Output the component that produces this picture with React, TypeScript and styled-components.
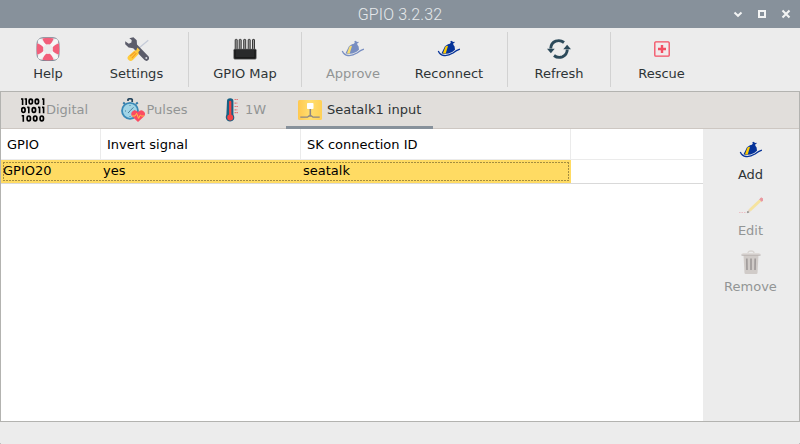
import React from "react";
import styled, { createGlobalStyle } from "styled-components";

const GlobalStyle = createGlobalStyle`
  body { margin: 0; background: #3b3b3b; }
  * { box-sizing: border-box; }
`;

const Window = styled.div`
  width: 800px;
  height: 444px;
  display: flex;
  flex-direction: column;
  background: #ececec;
  border-radius: 0 0 1px 1px;
  overflow: hidden;
  font: 13px/16px "DejaVu Sans", sans-serif;
  color: #2e3436;
`;

const TitleBar = styled.header`
  height: 28px;
  flex: none;
  display: grid;
  grid-template-columns: 80px 1fr 80px;
  align-items: center;
  background: #87919b;
  color: #e6e9eb;
`;

const Title = styled.h1`
  grid-column: 2;
  margin: 0;
  padding-top: 2px;
  text-align: center;
  font: 300 16px/26px Roboto, sans-serif;
  letter-spacing: 0.15px;
`;

const WindowControls = styled.div`
  display: flex;
  justify-content: flex-end;
  gap: 12px;
  padding-right: 8px;

  svg { display: block; }
`;

const Toolbar = styled.nav`
  height: 63px;
  flex: none;
  display: flex;
  padding: 4px 0;
`;

const Tool = styled.button<{ $width: number; $disabled?: boolean }>`
  width: ${(p) => p.$width}px;
  height: 56px;
  flex: none;
  display: flex;
  flex-direction: column;
  align-items: center;
  gap: 5px;
  padding: 5px 0 0;
  border: 0;
  background: none;
  font: inherit;
  white-space: nowrap;
  color: ${(p) => (p.$disabled ? "#929595" : "#2e3436")};
`;

const Spacer = styled.span<{ $width: number }>`
  width: ${(p) => p.$width}px;
  flex: none;
`;

const Separator = styled.div`
  width: 1px;
  height: 55px;
  flex: none;
  background: #d2d2d2;
`;

const Glyph = styled.svg<{ $faded?: boolean }>`
  display: block;
  flex: none;
  opacity: ${(p) => (p.$faded ? 0.5 : 1)};
`;

const Notebook = styled.main`
  height: 331px;
  flex: none;
  display: flex;
  flex-direction: column;
  border: 1px solid #b3b3b0;
`;

const TabBar = styled.div`
  height: 37px;
  flex: none;
  display: flex;
  background: #e1dedb;
  border-bottom: 1px solid #cdc7c2;
`;

const Tab = styled.div<{ $width: number; $pad: number; $gap: number; $active?: boolean }>`
  width: ${(p) => p.$width}px;
  height: 37px;
  flex: none;
  display: flex;
  align-items: center;
  gap: ${(p) => p.$gap}px;
  padding: 0 0 1px ${(p) => p.$pad}px;
  white-space: nowrap;
  color: ${(p) => (p.$active ? "#2e3436" : "#929595")};
  box-shadow: ${(p) => (p.$active ? "inset 0 -3px #87919b" : "none")};
`;

const Page = styled.div`
  flex: 1;
  display: flex;
`;

const List = styled.div`
  width: 702px;
  background: #fff;
  color: #000;
`;

const HeaderRow = styled.div`
  height: 31px;
  display: grid;
  grid-template-columns: 100px 200px 270px;
  border-bottom: 1px solid #ebebeb;
`;

const HeaderCell = styled.div`
  padding: 8px 6px 0;
  border-right: 1px solid #ebebeb;
`;

const RowLine = styled.div`
  height: 24px;
  border-bottom: 1px solid #d9d9d9;
`;

const dashX = "repeating-linear-gradient(90deg, #a48d40 0 2px, transparent 2px 3px)";
const dashY = "repeating-linear-gradient(180deg, #a48d40 0 2px, transparent 2px 3px)";

const SelectedRow = styled.div`
  width: 570px;
  height: 23px;
  display: grid;
  grid-template-columns: 100px 200px 270px;
  background:
    ${dashX} 2px 2px / 566px 1px no-repeat,
    ${dashX} 2px 20px / 566px 1px no-repeat,
    ${dashY} 2px 2px / 1px 19px no-repeat,
    ${dashY} 567px 2px / 1px 19px no-repeat,
    #ffdb63;
`;

const Cell = styled.div`
  padding: 3px 2px;
`;

const SidePanel = styled.aside`
  flex: 1;
  padding-top: 4px;
`;

type IconProps = { faded?: boolean };

const HelpIcon = () => (
  <Glyph width="24" height="24" viewBox="0 0 24 24">
    <rect x="1" y=".7" width="22" height="22.8" rx="6" fill="#e9eaec" stroke="#7d8794" strokeWidth="1" />
    <path d="M6.300 1.500q5.700-1.400 11.400 0l-3 6.500h-5.400zM6.300 22.700q5.700 1.400 11.400 0l-3-6.500h-5.400zM1.300 6.300q-1.200 5.700 0 11.400l6.200-3v-5.400zM22.700 6.300q1.200 5.700 0 11.400l-6.200-3v-5.400z" fill="#f25f7b" />
    <path d="M4 4.200l16 16M20 4.200l-16 16" stroke="#f6f6f6" strokeWidth="4" strokeLinecap="round" />
    <circle cx="12" cy="12.100" r="4.800" fill="#ececec" />
  </Glyph>
);

const SettingsIcon = () => (
  <Glyph width="24" height="24" viewBox="0 0 24 24">
    <path d="M23.3 3.2L14 11" stroke="#c5cbd8" strokeWidth="1.3" />
    <path d="M4.3 1.2l4.1-.9 3.3 3 .3 4.1 11.4 11.9q1.6 2-.2 3.7t-3.7.1L8.2 11.2 3.6 10.6.2 7.2V4.3l3.6 2.4 2.6-1.2.3-2.6z" fill="#5c5d6b" />
    <circle cx="21.3" cy="21.1" r="1" fill="#d9dbe0" />
    <path d="M12.4 10.5l2.6 2.7-1.6 1.8.3 1.9-5.8 6.2q-2.2 1.7-4.3 0t-.3-4.2l6.2-5.5 1.7.1z" fill="#ffcb3d" />
    <path d="M5.1 19.2l5-4.3M6.9 21.1l4.5-5" stroke="#f49a25" strokeWidth="1.1" />
  </Glyph>
);

const GpioIcon = () => (
  <Glyph width="24" height="24" viewBox="0 0 24 24">
    <g fill="#a2a2a2" stroke="#292929" strokeWidth=".9">
      {[2, 6, 10.5, 15, 19.3].map((x) => (
        <rect key={x} x={x + 0.2} y="2.4" width="2" height="11" rx=".5" />
      ))}
    </g>
    <rect x=".7" y="12" width="22.6" height="10.2" rx="1.2" fill="#292a2b" stroke="#777" strokeWidth=".5" />
    <path d="M2 13v7.5M22 13v7.5M2 20.8h20" stroke="#151515" />
  </Glyph>
);

const BoatIcon = ({ faded }: IconProps) => (
  <Glyph width="24" height="24" viewBox="0 0 24 24" $faded={faded}>
    <path d="M4.5 16.2L8 9.3l3-2.1 1.9-.5.9-1.2-.5-.9.9-.9 2.2 1.2 1.200-.2-.2 1.300-1 .1-.1 1.700 1.300 1.600.4 3.300-2.800 2.200-3.700 1.700-5 .3z" fill="#063399" />
    <path d="M5.900 16.500L8.600 9.300l2.500-.5-2.400 7.800z" fill="#ffcc00" />
    <path d="M1.300 14q1.700 4 5.700 4.500t9-2.500q3.500-2.800 6.900-3.900" fill="none" stroke="#063399" strokeWidth="1.300" />
  </Glyph>
);

const RefreshIcon = () => (
  <Glyph width="24" height="24" viewBox="0 0 24 24">
    <path d="M3.7 11.5q.3-5.500 5-7.300 4.500-1.600 8.300 1.300M20.300 12.500q-.3 5.500-5 7.300-4.500 1.600-8.300-1.300" fill="none" stroke="#2c4a5a" strokeWidth="2.900" />
    <path d="M0 11.7h7.700l-3.800 4.600zM24 12.300h-7.700l3.800-4.600z" fill="#2c4a5a" />
  </Glyph>
);

const RescueIcon = () => (
  <Glyph width="24" height="24" viewBox="0 0 24 24">
    <rect x="4.8" y="4.8" width="14.4" height="14.4" rx="1" fill="#f1eaeb" stroke="#f34e62" strokeWidth="1.300" />
    <path d="M12 8v8M8 12h8" stroke="#f34e62" strokeWidth="2.400" />
  </Glyph>
);

const bitRows = [
  { y: 1.2, bits: "11001", xs: [1.6, 5.2, 9.8, 15.9, 22.6] },
  { y: 9.6, bits: "01011", xs: [2.4, 7.8, 12.9, 18.6, 22.6] },
  { y: 18, bits: "1000", xs: [2.3, 7.8, 14.2, 20.8] },
];

const BinaryIcon = () => (
  <Glyph width="24" height="24" viewBox="0 0 24 24">
    <g fill="none" stroke="#000" strokeWidth="1.7">
      {bitRows.map(({ y, bits, xs }) =>
        bits.split("").map((bit, i) =>
          bit === "1" ? (
            <path key={`${y}-${i}`} d={`M${xs[i]} ${y - 0.9}v6.600M${xs[i] - 1.6} ${y - 0.2}h1.600`} strokeWidth="1.600" />
          ) : (
            <ellipse key={`${y}-${i}`} cx={xs[i]} cy={y + 2.4} rx="1.700" ry="2.400" />
          )
        )
      )}
    </g>
  </Glyph>
);

const PulseIcon = () => (
  <Glyph width="24" height="24" viewBox="0 0 24 24">
    <path d="M7 3V1.4Q9 0 11.2 1.4V4" fill="none" stroke="#23445d" strokeWidth="1.7" />
    <path d="M2.2 4.4L4 6M15 6l1.8-1.6" stroke="#367aa4" strokeWidth="2" />
    <circle cx="9" cy="12.800" r="8" fill="#a1d4e6" stroke="#3a89b7" strokeWidth="1.800" />
    <path d="M9 12.800l3.500-3.500M9 13l-2 2M4 13h1M13 13h1M9 18v1M9 7v1" fill="none" stroke="#4b7d99" strokeWidth="1" />
    <path d="M17 23.900l-6-5.700q-1.500-2.200-.1-4.200 2.600-3.200 6.100-.1 3.500-3.100 6.300.1 1.500 2-.1 4.200z" fill="#fb4b62" />
    <path d="M11 18h3l1.600-2.600 2 5 1.700-3.400 1.300 1H23" fill="none" stroke="#ffc24b" strokeWidth="1" />
  </Glyph>
);

const ThermometerIcon = () => (
  <Glyph width="24" height="24" viewBox="0 0 24 24">
    <path d="M7 3Q7 .2 10.2.2T13.4 3v13.4q2.2 4.7-.8 6.400t-5.400-.4-.8-6z" fill="#176083" />
    <circle cx="10.2" cy="19.5" r="3" fill="#f34345" />
    <path d="M10.2 4v14" stroke="#f34345" strokeWidth="2.3" strokeLinecap="round" />
    <path d="M14.5 1.5H18M14.5 5.1h2.8M14.5 8.5H18M14.5 11.8h2.8M14.5 14.6H18" stroke="#e47c7d" strokeWidth="1.2" strokeDasharray="1.7 .4" />
  </Glyph>
);

const SeatalkIcon = () => (
  <Glyph width="24" height="20" viewBox="0 0 24 20">
    <defs>
      <linearGradient id="panel" x1="0" y1="0" x2="1" y2="0">
        <stop offset="0" stopColor="#ffc84f" />
        <stop offset=".5" stopColor="#ffde70" />
        <stop offset="1" stopColor="#ffd055" />
      </linearGradient>
    </defs>
    <rect width="24" height="20" rx="1.5" fill="url(#panel)" />
    <path d="M2.300 17.200h7.200l1.500-1.200h2.500l1.500 1.200h6.700" fill="none" stroke="#8d8684" strokeWidth="1.300" />
    <path d="M12.300 9v7" stroke="#8d8684" strokeWidth="1.600" />
    <rect x="9" y="3" width="6.5" height="6" rx=".7" fill="#fff" />
  </Glyph>
);

const PencilIcon = () => (
  <Glyph width="24" height="24" viewBox="0 0 24 24" $faded>
    <path d="M0 18.500h7.500" stroke="#ed7180" strokeWidth=".7" strokeDasharray="1.500 1" />
    <path d="M9.800 15.200L20.200 5.500l2 2.100-10.400 9.700z" fill="#ffdb52" />
    <path d="M9.800 15.200l-1.500 3.400 3.500-1.300z" fill="#dfb892" />
    <path d="M8.300 18.700l.5-1.400 1 1z" fill="#111" stroke="#222" strokeWidth=".7" />
    <path d="M20.700 5.300l1-1.100q1-.6 1.800.3t.3 1.800l-1.100 1.100z" fill="#e94452" stroke="#e94452" />
  </Glyph>
);

const TrashIcon = () => (
  <Glyph width="24" height="24" viewBox="0 0 24 24">
    <path d="M9 3q0-2 3-2t3 2" fill="none" stroke="#d8d4d1" strokeWidth="1.400" />
    <path d="M4.500 5h15l-1 18q-.1 1-1.200 1H6.700q-1 0-1.200-1z" fill="#d0cbc8" />
    <path d="M2.200 5q0-1.500 2-2h15.600q2 .5 2 2z" fill="#dedad7" />
    <path d="M2.500 5.200h19" stroke="#b8b3b0" />
    <path d="M7.800 8.500l.2 11.500M12 8.500V20M16.200 8.500L16 20" stroke="#a19c9b" strokeWidth="1.700" />
  </Glyph>
);

export default function App() {
  return (
    <>
      <GlobalStyle />
      <Window>
        <TitleBar>
          <Title>GPIO 3.2.32</Title>
          <WindowControls>
            <svg width="12" height="12" viewBox="0 0 12 12">
              <path d="M2.5 4.5L6 7.8l3.5-3.3" fill="none" stroke="#f3f4f4" strokeWidth="2" />
            </svg>
            <svg width="12" height="12" viewBox="0 0 12 12">
              <rect x="3" y="3" width="6" height="6" fill="none" stroke="#f3f4f4" strokeWidth="2" />
            </svg>
            <svg width="12" height="12" viewBox="0 0 12 12">
              <path d="M2.5 2.5l7 7M9.5 2.5l-7 7" stroke="#f3f4f4" strokeWidth="2.1" />
            </svg>
          </WindowControls>
        </TitleBar>
        <Toolbar>
          <Tool $width={96}><HelpIcon />Help</Tool>
          <Tool $width={81}><SettingsIcon />Settings</Tool>
          <Spacer $width={11} />
          <Separator />
          <Tool $width={112}><GpioIcon />GPIO Map</Tool>
          <Separator />
          <Tool $width={102} $disabled><BoatIcon faded />Approve</Tool>
          <Tool $width={90}><BoatIcon />Reconnect</Tool>
          <Spacer $width={13} />
          <Separator />
          <Tool $width={102}><RefreshIcon />Refresh</Tool>
          <Separator />
          <Tool $width={101}><RescueIcon />Rescue</Tool>
        </Toolbar>
        <Notebook>
          <TabBar>
            <Tab $width={108} $pad={20} $gap={1}><BinaryIcon />Digital</Tab>
            <Tab $width={99} $pad={12} $gap={1.5}><PulseIcon />Pulses</Tab>
            <Tab $width={78} $pad={12} $gap={1}><ThermometerIcon />1W</Tab>
            <Tab $width={147} $pad={12} $gap={5} $active><SeatalkIcon />Seatalk1 input</Tab>
          </TabBar>
          <Page>
            <List>
              <HeaderRow>
                <HeaderCell>GPIO</HeaderCell>
                <HeaderCell>Invert signal</HeaderCell>
                <HeaderCell>SK connection ID</HeaderCell>
              </HeaderRow>
              <RowLine>
                <SelectedRow>
                  <Cell>GPIO20</Cell>
                  <Cell>yes</Cell>
                  <Cell>seatalk</Cell>
                </SelectedRow>
              </RowLine>
            </List>
            <SidePanel>
              <Tool $width={95}><BoatIcon />Add</Tool>
              <Tool $width={95} $disabled><PencilIcon />Edit</Tool>
              <Tool $width={95} $disabled><TrashIcon />Remove</Tool>
            </SidePanel>
          </Page>
        </Notebook>
      </Window>
    </>
  );
}
